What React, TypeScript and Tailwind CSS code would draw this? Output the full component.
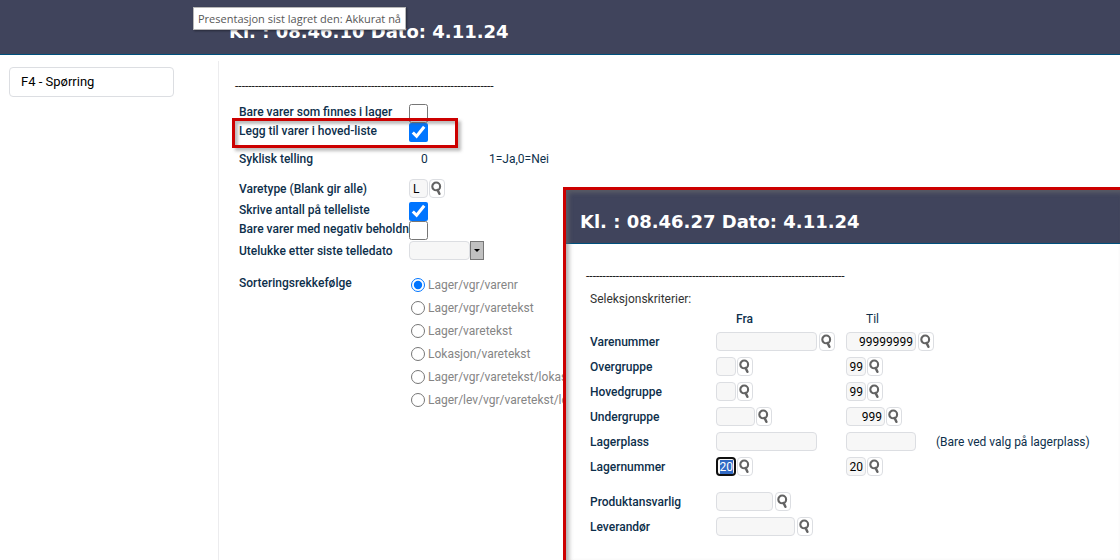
import React, { useEffect, useRef, useState } from "react";

const RULE = "-".repeat(78);

const sortOptions = [
  "Lager/vgr/varenr",
  "Lager/vgr/varetekst",
  "Lager/varetekst",
  "Lokasjon/varetekst",
  "Lager/vgr/varetekst/lokasjon",
  "Lager/lev/vgr/varetekst/lokasjon",
];

interface Criterion {
  id: string;
  label: string;
  width: string;
  toWidth?: string;
  from?: string;
  to?: string;
  lookup: boolean;
  compact?: boolean;
  note?: string;
}

const criteria: Criterion[] = [
  { id: "varenummer", label: "Varenummer", width: "w-[101px]", toWidth: "w-[70px]", to: "99999999", lookup: true },
  { id: "overgruppe", label: "Overgruppe", width: "w-5", toWidth: "w-5", to: "99", lookup: true, compact: true },
  { id: "hovedgruppe", label: "Hovedgruppe", width: "w-5", toWidth: "w-5", to: "99", lookup: true, compact: true },
  {
    id: "undergruppe",
    label: "Undergruppe",
    width: "w-[39px]",
    toWidth: "w-[39px]",
    to: "999",
    lookup: true,
    compact: true,
  },
  {
    id: "lagerplass",
    label: "Lagerplass",
    width: "w-[101px]",
    toWidth: "w-[70px]",
    lookup: false,
    note: "(Bare ved valg på lagerplass)",
  },
  {
    id: "lagernummer",
    label: "Lagernummer",
    width: "w-5",
    toWidth: "w-5",
    from: "20",
    to: "20",
    lookup: true,
    compact: true,
  },
];

const extraCriteria: Criterion[] = [
  { id: "produktansvarlig", label: "Produktansvarlig", width: "w-[57px]", lookup: true },
  { id: "leverandor", label: "Leverandør", width: "w-[79px]", lookup: true },
];

function LookupButton({ label }: { label: string }) {
  return (
    <button
      type="button"
      aria-label={label}
      className="flex h-[19px] w-4 shrink-0 items-center justify-center rounded border border-[#dcdee2] bg-white"
    >
      <svg width="12" height="15" viewBox="0 0 12 15" fill="none" stroke="#636363" className="shrink-0">
        <circle cx="5.2" cy="5.4" r="3.9" strokeWidth="2.1" />
        <path d="M6.6 9 L8.4 12.8" strokeWidth="2.5" strokeLinecap="round" />
      </svg>
    </button>
  );
}

interface FieldProps {
  id: string;
  label: string;
  width: string;
  value?: string;
  lookup: boolean;
  compact?: boolean;
  autoSelect?: boolean;
}

function Field({ id, label, width, value = "", lookup, compact, autoSelect }: FieldProps) {
  const ref = useRef<HTMLInputElement>(null);

  useEffect(() => {
    if (autoSelect) {
      ref.current?.focus();
      ref.current?.select();
    }
  }, [autoSelect]);

  const border = autoSelect ? "border-2 border-[#101010] px-px" : "border border-[#dcdee2] px-0.5";

  return (
    <div className={`flex items-center ${compact ? "gap-px" : "gap-0.5"}`}>
      <input
        ref={ref}
        id={id}
        type="text"
        aria-label={label}
        defaultValue={value}
        className={`h-[19px] rounded bg-[#f7f7f7] text-right text-xs text-black outline-none selection:bg-[#316ac5] selection:text-white ${width} ${border}`}
      />
      {lookup && <LookupButton label={`Søk ${label}`} />}
    </div>
  );
}

function CriterionRow({ item }: { item: Criterion }) {
  return (
    <div className="grid h-[25px] grid-cols-[126px_130px_90px_1fr] items-center">
      <label htmlFor={`${item.id}-fra`} className="font-medium">
        {item.label}
      </label>
      <Field
        id={`${item.id}-fra`}
        label={`${item.label} fra`}
        width={item.width}
        value={item.from}
        lookup={item.lookup}
        compact={item.compact}
        autoSelect={item.id === "lagernummer"}
      />
      {item.toWidth && (
        <Field
          id={`${item.id}-til`}
          label={`${item.label} til`}
          width={item.toWidth}
          value={item.to}
          lookup={item.lookup}
          compact={item.compact}
        />
      )}
      {item.note && <span className="whitespace-nowrap">{item.note}</span>}
    </div>
  );
}

interface CheckRowProps {
  id: string;
  label: string;
  checked?: boolean;
}

function CheckRow({ id, label, checked = false }: CheckRowProps) {
  return (
    <div className="grid h-[19px] grid-cols-[170px_1fr] items-start">
      <label htmlFor={id} className="leading-[17px] font-medium whitespace-nowrap">
        {label}
      </label>
      <input id={id} type="checkbox" defaultChecked={checked} className="size-[19px]" />
    </div>
  );
}

function SelectionWindow() {
  return (
    <section className="absolute top-[187px] right-0 bottom-0 left-[563px] overflow-hidden border-t-3 border-l-3 border-[#cc0000] bg-white">
      <header className="border-b border-[#00507c] bg-[#40445c] pt-5 pb-[9px] pl-[14px]">
        <h2 className="font-['DejaVu_Sans',sans-serif] text-lg leading-6 font-bold text-white">
          Kl. : 08.46.27 Dato: 4.11.24
        </h2>
      </header>
      <div className="pt-6 pl-5">
        <div className="leading-4 text-[#222]">{RULE}</div>
        <div className="pl-1">
          <p className="mt-[7px] leading-4 text-[#333]">Seleksjonskriterier:</p>
          <div className="mt-1 grid grid-cols-[126px_130px_1fr] leading-4">
            <span />
            <span className="pl-5 font-medium">Fra</span>
            <span className="pl-5">Til</span>
          </div>
          <div className="mt-0.5">
            {criteria.map((item) => (
              <CriterionRow key={item.id} item={item} />
            ))}
          </div>
          <div className="mt-[10px]">
            {extraCriteria.map((item) => (
              <CriterionRow key={item.id} item={item} />
            ))}
          </div>
        </div>
      </div>
      <div className="pointer-events-none absolute inset-0 shadow-[inset_3px_3px_4px_rgba(110,110,110,0.55)]" />
    </section>
  );
}

export default function App() {
  const [sort, setSort] = useState(sortOptions[0]);

  return (
    <div className="relative flex min-h-screen flex-col overflow-hidden bg-white font-['Roboto',sans-serif] text-xs text-[#0d2f4b]">
      <header className="border-b border-[#00507c] bg-[#40445c] pt-5 pb-[10px] pl-[229px]">
        <h1 className="font-['DejaVu_Sans',sans-serif] text-lg leading-6 font-bold text-white">
          Kl. : 08.46.10 Dato: 4.11.24
        </h1>
      </header>
      <div
        role="tooltip"
        className="absolute top-[7px] left-[193px] border border-[#b8b8b8] bg-white px-1 font-['Open_Sans',sans-serif] text-[11px] leading-[21px] whitespace-nowrap text-[#575757] shadow-[1px_1px_2px_rgba(0,0,0,0.4)]"
      >
        Presentasjon sist lagret den: Akkurat nå
      </div>

      <div className="flex grow pt-[6px]">
        <nav className="w-[219px] shrink-0 border-r border-[#ececee] pt-[6px] pl-[9px]">
          <button
            type="button"
            className="h-[30px] w-[165px] rounded border border-[#dcdee2] bg-white pl-[11px] text-left text-[13px] text-black"
          >
            F4 - Spørring
          </button>
        </nav>

        <main className="grow pt-[17px] pl-4">
          <div className="leading-4 text-[#222]">{RULE}</div>
          <form className="pt-[10px] pl-1">
            <CheckRow id="finnes" label="Bare varer som finnes i lager" />
            <div className="relative">
              <CheckRow id="hovedliste" label="Legg til varer i hoved-liste" checked />
              <div className="pointer-events-none absolute -top-[5px] -left-[7px] h-[30px] w-[226px] border-3 border-[#cc0000] shadow-[inset_3px_3px_3px_rgba(90,90,90,0.4),3px_3px_3px_rgba(90,90,90,0.4)]" />
            </div>
            <div className="mt-2 grid grid-cols-[170px_80px_1fr] items-center leading-[19px]">
              <span className="font-medium">Syklisk telling</span>
              <span className="pl-3">0</span>
              <span>1=Ja,0=Nei</span>
            </div>
            <div className="mt-[10px] grid grid-cols-[170px_1fr] items-center">
              <label htmlFor="varetype" className="font-medium">
                Varetype (Blank gir alle)
              </label>
              <div className="flex items-center gap-px">
                <input
                  id="varetype"
                  type="text"
                  defaultValue="L"
                  className="h-[19px] w-[19px] rounded border border-[#dcdee2] bg-[#f7f7f7] px-[3px] text-xs text-black"
                />
                <LookupButton label="Søk varetype" />
              </div>
            </div>
            <div className="mt-1">
              <CheckRow id="antall" label="Skrive antall på telleliste" checked />
              <CheckRow id="negativ" label="Bare varer med negativ beholdn" />
            </div>
            <div className="mt-px grid grid-cols-[170px_1fr] items-center">
              <label htmlFor="telledato" className="font-medium">
                Utelukke etter siste telledato
              </label>
              <div className="flex items-center">
                <input
                  id="telledato"
                  type="text"
                  className="h-[19px] w-[61px] rounded border border-[#dcdee2] bg-[#f7f7f7] px-1 text-xs text-black"
                />
                <button
                  type="button"
                  aria-label="Velg dato"
                  className="flex h-[19px] w-[14px] items-center justify-center border border-[#777] bg-[#c0c0c0]"
                >
                  <svg width="6" height="3" viewBox="0 0 6 3" fill="#000">
                    <path d="M0 0h6L3 3z" />
                  </svg>
                </button>
              </div>
            </div>
            <fieldset className="mt-[13px] grid grid-cols-[170px_1fr]">
              <span className="leading-5 font-medium">Sorteringsrekkefølge</span>
              <div className="pl-0.5 text-[#858585]">
                {sortOptions.map((option) => (
                  <label key={option} className="flex h-[23px] items-center gap-[3px] whitespace-nowrap">
                    <input
                      type="radio"
                      name="sort"
                      checked={sort === option}
                      onChange={() => setSort(option)}
                      className="size-[14px]"
                    />
                    {option}
                  </label>
                ))}
              </div>
            </fieldset>
          </form>
        </main>
      </div>

      <SelectionWindow />
    </div>
  );
}
